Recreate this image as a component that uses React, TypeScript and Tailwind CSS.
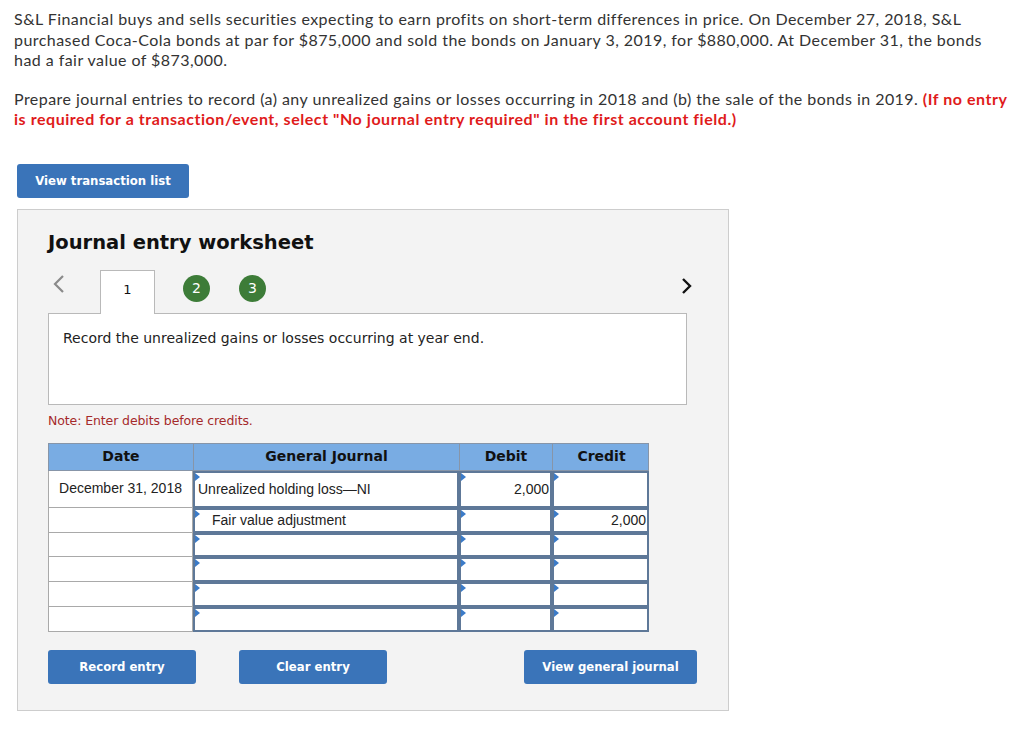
const SANS = "font-['Lato','Noto_Sans',sans-serif] [font-variant-ligatures:none]";
const VERDANA = "font-['DejaVu_Sans','Verdana',sans-serif]";
const TAHOMA = "font-['DejaVu_Sans_Condensed','DejaVu_Sans','Tahoma',sans-serif]";
const ARIAL = "font-['Liberation_Sans','Arial',sans-serif]";

type Row = { date?: string; account?: string; indent?: boolean; debit?: string; credit?: string; h: string };

const rows: Row[] = [
  { date: "December 31, 2018", account: "Unrealized holding loss—NI", debit: "2,000", h: "h-[37px]" },
  { account: "Fair value adjustment", indent: true, credit: "2,000", h: "h-[25px]" },
  { h: "h-[24px]" },
  { h: "h-[25px]" },
  { h: "h-[25px]" },
  { h: "h-[25px]" },
];

function Marker() {
  return (
    <span className="absolute left-0 top-0 h-0 w-0 border-y-[4px] border-l-[5px] border-y-transparent border-l-[#3b7bc8]" />
  );
}

function InputCell({ children, align, className }: { children?: React.ReactNode; align?: "right"; className?: string }) {
  return (
    <div
      className={`relative flex items-center border-2 border-[#5e7898] bg-white ${ARIAL} text-[14px] text-[#222] ${
        align === "right" ? "justify-end pr-[1px]" : "pl-[3px]"
      } ${className ?? ""}`}
    >
      <Marker />
      {children}
    </div>
  );
}

function BlueButton({ label, className }: { label: string; className?: string }) {
  return (
    <button
      className={`flex items-center justify-center rounded-[3px] bg-[#3a74b9] ${TAHOMA} text-[13px] font-bold text-white ${className ?? ""}`}
    >
      {label}
    </button>
  );
}

export default function App() {
  return (
    <div className="min-h-[729px] w-[1024px] bg-white">
      <div className={`px-[14px] pt-[9px] ${SANS} text-[16px] leading-[20.5px] tracking-[0.45px] text-[#333]`}>
        <p>
          S&amp;L Financial buys and sells securities expecting to earn profits on short-term differences in price. On December 27, 2018, S&amp;L
          <br />
          purchased Coca-Cola bonds at par for $875,000 and sold the bonds on January 3, 2019, for $880,000. At December 31, the bonds
          <br />
          had a fair value of $873,000.
        </p>
        <p className="mt-[18px]">
          Prepare journal entries to record (a) any unrealized gains or losses occurring in 2018 and (b) the sale of the bonds in 2019.{" "}
          <span className="font-bold tracking-[0.55px] text-[#e01b1b]">(If no entry</span>
          <br />
          <span className="font-bold tracking-[0.55px] text-[#e01b1b]">
            is required for a transaction/event, select "No journal entry required" in the first account field.)
          </span>
        </p>
      </div>

      <div className="pl-[17px] pt-[34px]">
        <BlueButton label="View transaction list" className="h-[34px] w-[172px]" />
      </div>

      <div className="ml-[17px] mt-[11px] h-[502px] w-[712px] border border-[#cdcdcd] bg-[#f3f3f3] px-[30px] pt-[18px]">
        <h2 className={`${VERDANA} text-[19.5px] font-bold text-[#111]`}>Journal entry worksheet</h2>

        <div className="mt-[13px] flex h-[43px] items-end">
          <div className="flex h-full w-[52px] items-start pl-[4px] pt-[3px]">
            <svg width="14" height="20" viewBox="0 0 14 20" className="mt-[1px]">
              <path d="M11 2 L3 10 L11 18" fill="none" stroke="#8a8a8a" strokeWidth="2.2" />
            </svg>
          </div>
          <div className={`relative z-10 -mb-[1px] flex h-[44px] w-[55px] items-start justify-center border border-b-0 border-[#b9b9b9] bg-white pt-[9px] ${VERDANA} text-[13px] text-[#111]`}>
            1
          </div>
          <div className="flex h-full items-start gap-[29px] pl-[28px] pt-[5px]">
            {["2", "3"].map((n) => (
              <span
                key={n}
                className={`flex h-[27px] w-[27px] items-center justify-center rounded-full bg-[#3d7c38] ${VERDANA} text-[14px] text-white`}
              >
                {n}
              </span>
            ))}
          </div>
          <div className="ml-auto flex h-full items-start pr-[4px] pt-[6px]">
            <svg width="14" height="20" viewBox="0 0 14 20">
              <path d="M3 3 L10 10 L3 17" fill="none" stroke="#111" strokeWidth="2.4" />
            </svg>
          </div>
        </div>

        <div className={`h-[92px] w-[639px] border border-[#b9b9b9] bg-white px-[14px] pt-[14px] ${VERDANA} text-[14px] text-[#222]`}>
          Record the unrealized gains or losses occurring at year end.
        </div>

        <p className={`mt-[7px] ${VERDANA} text-[12.5px] tracking-[-0.1px] text-[#a52a2a]`}>Note: Enter debits before credits.</p>

        <div className="mt-[12px] w-[601px]">
          <div className={`grid h-[28px] grid-cols-[145px_266px_93px_97px] border border-[#8795a8] bg-[#79ace3] ${VERDANA} text-[14px] font-bold text-[#111]`}>
            <div className="flex items-center justify-center border-r border-[#8795a8]">Date</div>
            <div className="flex items-center justify-center border-r border-[#8795a8]">General Journal</div>
            <div className="flex items-center justify-center border-r border-[#8795a8]">Debit</div>
            <div className="flex items-center justify-center">Credit</div>
          </div>
          {rows.map((r, i) => (
            <div key={i} className={`grid grid-cols-[145px_266px_93px_97px] ${r.h}`}>
              <div className={`flex items-center justify-center border border-t-0 border-[#a9a9a9] bg-white ${ARIAL} text-[14px] text-[#222]`}>
                {r.date}
              </div>
              <InputCell className={r.indent ? "pl-[17px]" : ""}>{r.account}</InputCell>
              <InputCell align="right">{r.debit}</InputCell>
              <InputCell align="right">{r.credit}</InputCell>
            </div>
          ))}
        </div>

        <div className="mt-[18px] flex items-center">
          <BlueButton label="Record entry" className="h-[34px] w-[148px]" />
          <BlueButton label="Clear entry" className="ml-[43px] h-[34px] w-[148px]" />
          <BlueButton label="View general journal" className="ml-auto mr-[1px] h-[34px] w-[173px]" />
        </div>
      </div>
    </div>
  );
}
